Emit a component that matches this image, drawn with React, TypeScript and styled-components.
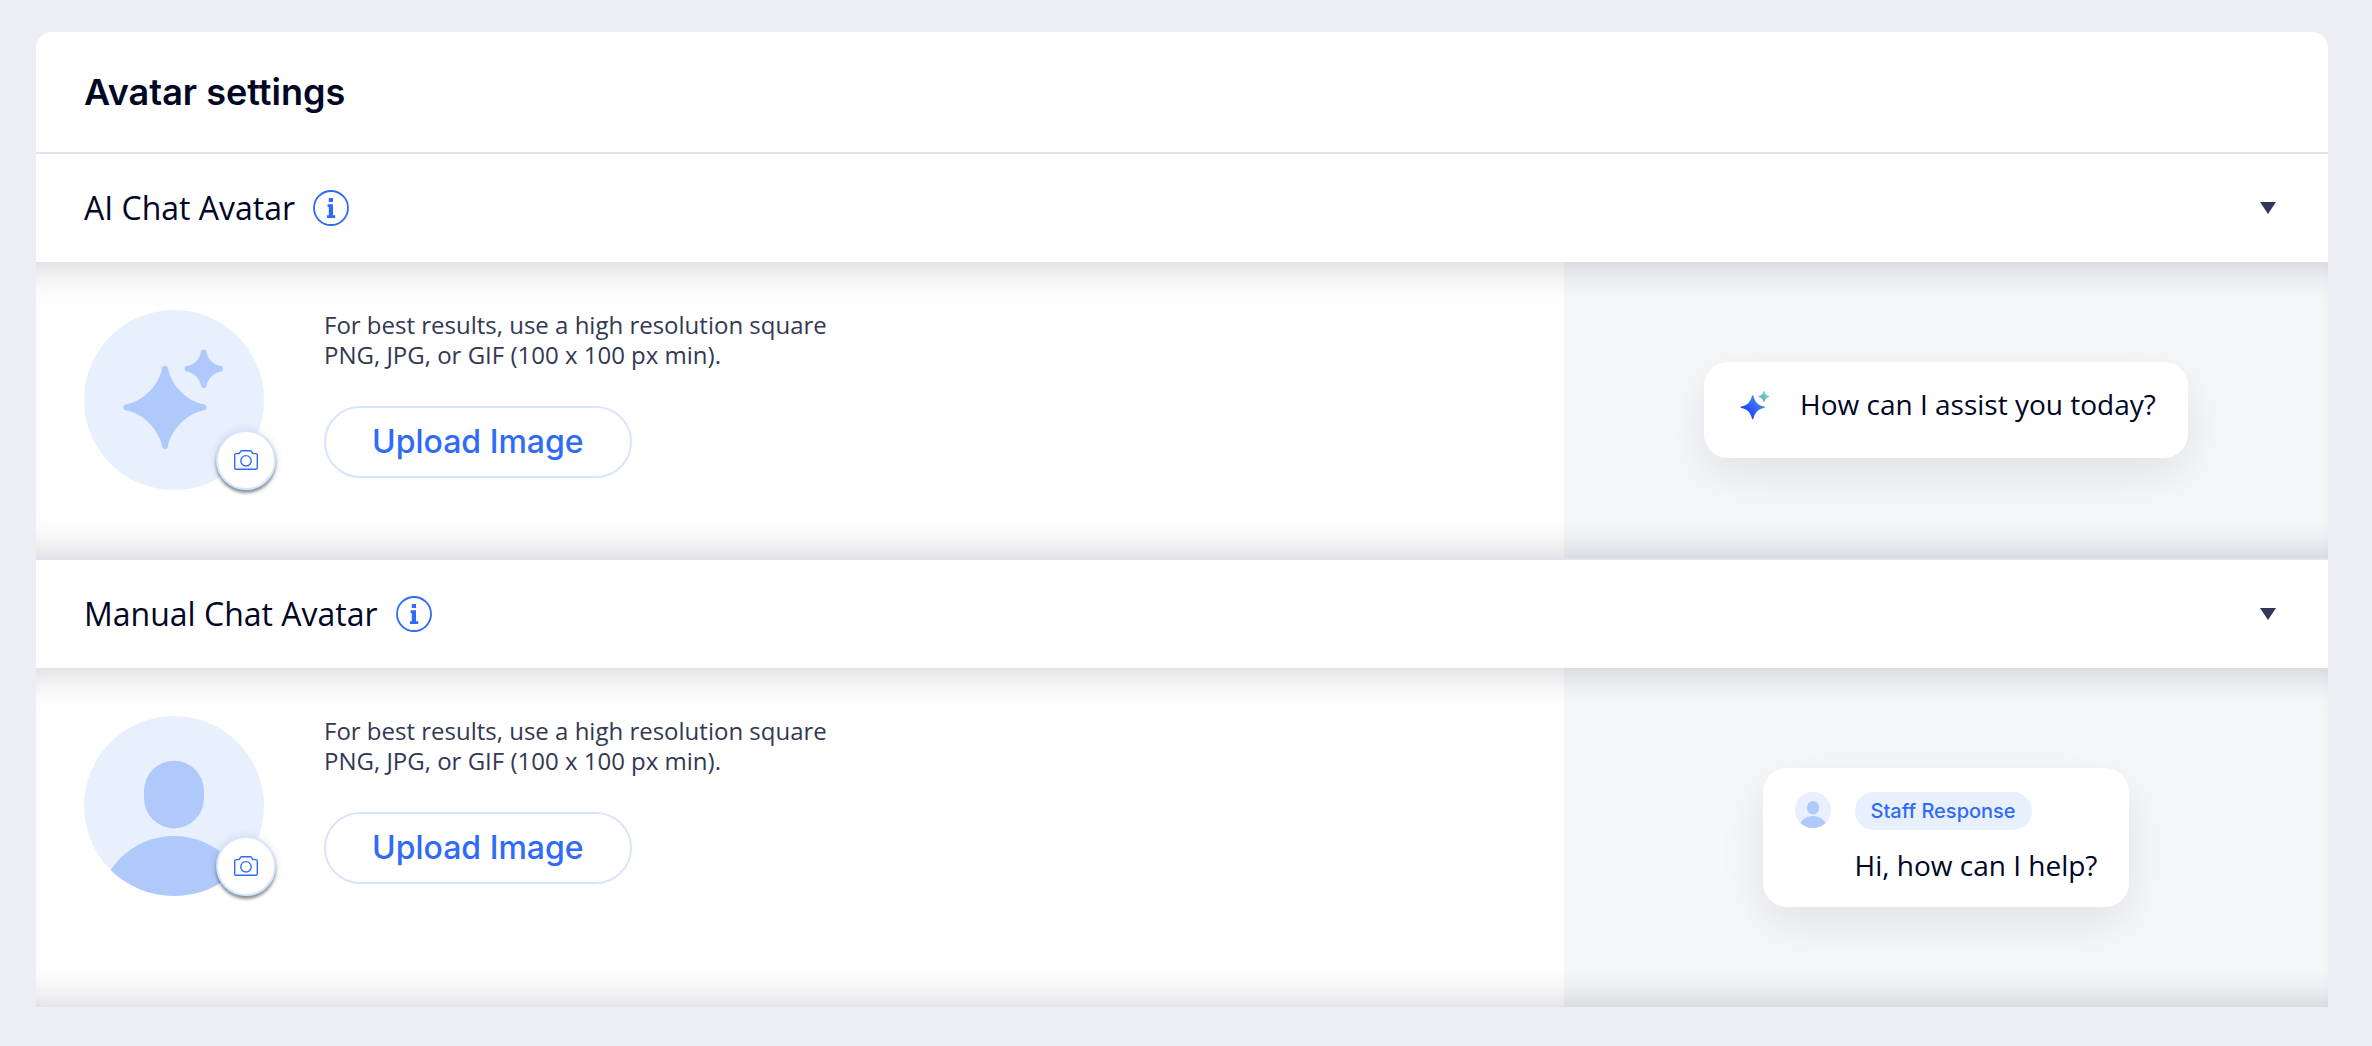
import React, { useState } from "react";
import styled, { createGlobalStyle, css } from "styled-components";

const color = {
  page: "#edeef3",
  surface: "#ffffff",
  preview: "#f5f7f9",
  divider: "#dfe5eb",
  ink: "#000624",
  inkSoft: "#333853",
  blue: "#2f6bf8",
  blueMid: "#b0c9fb",
  blueLight: "#e8f0fe",
  blueBorder: "#d8e5fd",
};

const bodyFont = css`
  font-family: "Open Sans", "Noto Sans", sans-serif;
`;
const strongFont = css`
  font-family: Inter, "Open Sans", sans-serif;
`;

const GlobalStyle = createGlobalStyle`
  *, *::before, *::after { box-sizing: border-box; }
  body {
    margin: 0;
    background: ${color.page};
    color: ${color.ink};
    ${bodyFont}
  }
  button { margin: 0; padding: 0; border: 0; background: none; color: inherit; cursor: pointer; }
  svg { display: block; }
`;

const Page = styled.main`
  padding: 32px 44px 36px 36px;
`;

const Card = styled.section`
  background: ${color.surface};
  border-radius: 16px 16px 0 0;
`;

const CardHeader = styled.header`
  padding: 36px 48px;
  border-bottom: 2px solid ${color.divider};
`;

const Title = styled.h1`
  margin: 0;
  ${strongFont}
  font-size: 36px;
  line-height: 48px;
  font-weight: 600;
`;

const SectionBar = styled.div`
  display: flex;
  align-items: center;
  gap: 18px;
  padding: 30px 48px;
`;

const SectionTitle = styled.h2`
  margin: 0;
  font-size: 32px;
  line-height: 48px;
  font-weight: 400;
`;

const InfoButton = styled.button`
  flex: none;
`;

const ToggleButton = styled.button`
  flex: none;
  margin-left: auto;
  padding: 4px;
`;

const Panel = styled.div<{ $divided: boolean }>`
  position: relative;
  display: grid;
  grid-template-columns: 2fr 1fr;
  border-bottom: ${(p) => (p.$divided ? `2px solid ${color.divider}` : "0")};

  &::after {
    content: "";
    position: absolute;
    inset: 0;
    pointer-events: none;
    box-shadow:
      inset 0 40px 44px -40px rgba(0, 6, 36, 0.21),
      inset 0 -40px 44px -40px rgba(0, 6, 36, 0.21);
  }
`;

const Editor = styled.div`
  display: flex;
  align-items: flex-start;
  gap: 60px;
  padding: 48px;
`;

const Preview = styled.div`
  display: flex;
  align-items: center;
  justify-content: center;
  padding: 100px 24px;
  background: ${color.preview};
`;

const AvatarFrame = styled.div`
  position: relative;
  flex: none;
`;

const CameraButton = styled.button`
  position: absolute;
  right: -12px;
  bottom: 0;
  display: grid;
  place-items: center;
  width: 60px;
  height: 60px;
  border: 2px solid ${color.blueBorder};
  border-radius: 50%;
  background: ${color.surface};
  box-shadow:
    0 3px 3px rgba(22, 45, 61, 0.48),
    0 0 9px rgba(22, 45, 61, 0.12);
`;

const UploadColumn = styled.div`
  display: flex;
  flex-direction: column;
  align-items: flex-start;
  gap: 36px;
`;

const Hint = styled.p`
  margin: 0;
  color: ${color.inkSoft};
  font-size: 24px;
  line-height: 30px;
`;

const UploadButton = styled.button`
  height: 72px;
  padding: 0 46px;
  border: 2px solid ${color.blueBorder};
  border-radius: 36px;
  background: ${color.surface};
  color: ${color.blue};
  ${strongFont}
  font-size: 32px;
  line-height: 48px;
  font-weight: 500;
`;

const Bubble = styled.div<{ $gap: number }>`
  display: flex;
  align-items: flex-start;
  gap: ${(p) => p.$gap}px;
  min-height: 96px;
  padding: 24px 32px;
  border-radius: 24px;
  background: ${color.surface};
  box-shadow: 0 16px 48px rgba(0, 6, 36, 0.09);
`;

const BubbleIcon = styled.span`
  flex: none;
`;

const BubbleBody = styled.div`
  display: flex;
  flex-direction: column;
  align-items: flex-start;
  gap: 17px;
`;

const Message = styled.p`
  margin: 0;
  font-size: 28px;
  line-height: 36px;
`;

const Badge = styled.span`
  padding: 0 16px;
  border-radius: 19px;
  background: ${color.blueLight};
  color: ${color.blue};
  ${strongFont}
  font-size: 20px;
  line-height: 38px;
  font-weight: 500;
`;

function InfoIcon() {
  return (
    <svg width="36" height="36" viewBox="0 0 36 36" aria-hidden="true">
      <circle cx="18" cy="18" r="17" fill="none" stroke={color.blue} strokeWidth="1.8" />
      <rect x="15.8" y="8" width="4.2" height="4" fill={color.blue} />
      <path d="M14.6 14.2H20V25.2H22.2V28H13.9V25.2H15.8V17H14.6Z" fill={color.blue} />
    </svg>
  );
}

function ArrowIcon() {
  return (
    <svg width="16" height="12" viewBox="0 0 16 12" aria-hidden="true">
      <path d="M0 0H16L8 12Z" fill="#32375a" />
    </svg>
  );
}

function CameraIcon() {
  return (
    <svg width="24" height="20" viewBox="0 0 24 20" fill="none" stroke={color.blue} strokeWidth="1.4" strokeLinejoin="round" aria-hidden="true">
      <path d="M2.2 3.6H4.4C5.2 3.6 5.6 3.2 6 2.4C6.4 1.3 6.9 .8 7.8 .8H16.2C17.1 .8 17.6 1.3 18 2.4C18.4 3.2 18.8 3.6 19.6 3.6H21.8C22.8 3.6 23.3 4.2 23.3 5.1V17.8C23.3 18.8 22.8 19.3 21.8 19.3H2.2C1.2 19.3 .7 18.8 .7 17.8V5.1C.7 4.2 1.2 3.6 2.2 3.6Z" />
      <circle cx="12" cy="10.8" r="5.2" />
    </svg>
  );
}

function SparkleAvatar() {
  return (
    <svg width="180" height="180" viewBox="0 0 180 180" aria-hidden="true">
      <circle cx="90" cy="90" r="90" fill={color.blueLight} />
      <g fill={color.blueMid}>
        <path
          transform="translate(81 97.4)"
          d="M-2.9-39.4C-2.2-42.3 2.2-42.3 2.9-39.4C6-22 22-6 39.4-2.9C42.3-2.2 42.3 2.2 39.4 2.9C22 6 6 22 2.9 39.4C2.2 42.3-2.2 42.3-2.9 39.4C-6 22-22 6-39.4 2.9C-42.3 2.2-42.3-2.2-39.4-2.9C-22-6-6-22-2.9-39.4Z"
        />
        <path
          transform="translate(119.8 58.8)"
          d="M-2.7-17.4C-2.2-19.8 2.2-19.8 2.7-17.4C4-9.6 9.6-4 17.4-2.7C19.8-2.2 19.8 2.2 17.4 2.7C9.6 4 4 9.6 2.7 17.4C2.2 19.8-2.2 19.8-2.7 17.4C-4 9.6-9.6 4-17.4 2.7C-19.8 2.2-19.8-2.2-17.4-2.7C-9.6-4-4-9.6-2.7-17.4Z"
        />
      </g>
    </svg>
  );
}

function PersonAvatar({ size }: { size: number }) {
  const clip = `person-clip-${size}`;
  return (
    <svg width={size} height={size} viewBox="0 0 180 180" aria-hidden="true">
      <clipPath id={clip}>
        <circle cx="90" cy="90" r="90" />
      </clipPath>
      <circle cx="90" cy="90" r="90" fill={color.blueLight} />
      <g fill={color.blueMid} clipPath={`url(#${clip})`}>
        <rect x="60" y="44.8" width="60" height="67.6" rx="30" />
        <circle cx="90" cy="196" r="76" />
      </g>
    </svg>
  );
}

function SparkleIcon() {
  return (
    <svg width="40" height="40" viewBox="0 0 40 40" aria-hidden="true">
      <defs>
        <linearGradient id="spark-large" x1="0" y1="1" x2="1" y2="0">
          <stop offset="0.3" stopColor="#2347fb" />
          <stop offset="0.85" stopColor="#4a94f0" />
        </linearGradient>
        <linearGradient id="spark-small" x1="0" y1="1" x2="1" y2="0">
          <stop offset="0.2" stopColor="#57a8d4" />
          <stop offset="0.8" stopColor="#79dcbb" />
        </linearGradient>
      </defs>
      <path
        fill="url(#spark-large)"
        d="M16.7 9.2C17.1 9.2 17.4 9.5 17.5 10C18.6 15.6 22.2 19.4 28 20.5C29.1 20.7 29.1 21.9 28 22.1C22.2 23.2 18.6 27 17.5 32.6C17.3 33.6 16.1 33.6 15.9 32.6C14.8 27 11.2 23.2 5.4 22.1C4.3 21.9 4.3 20.7 5.4 20.5C11.2 19.4 14.8 15.6 15.9 10C16 9.5 16.3 9.2 16.7 9.2Z"
      />
      <path
        fill="url(#spark-small)"
        d="M28 4.9C28.3 4.9 28.5 5.1 28.6 5.4C29.2 7.8 30.6 9.3 33.1 9.9C33.7 10 33.7 11 33.1 11.1C30.6 11.7 29.2 13.2 28.6 15.6C28.5 16.2 27.5 16.2 27.4 15.6C26.8 13.2 25.4 11.7 22.9 11.1C22.3 11 22.3 10 22.9 9.9C25.4 9.3 26.8 7.8 27.4 5.4C27.5 5.1 27.7 4.9 28 4.9Z"
      />
    </svg>
  );
}

interface AvatarSectionProps {
  title: string;
  avatar: React.ReactNode;
  preview: React.ReactNode;
  divided?: boolean;
}

function AvatarSection({ title, avatar, preview, divided = false }: AvatarSectionProps) {
  const [open, setOpen] = useState(true);
  return (
    <section>
      <SectionBar>
        <SectionTitle>{title}</SectionTitle>
        <InfoButton type="button" aria-label={`About ${title}`}>
          <InfoIcon />
        </InfoButton>
        <ToggleButton type="button" aria-label={`Toggle ${title}`} aria-expanded={open} onClick={() => setOpen(!open)}>
          <ArrowIcon />
        </ToggleButton>
      </SectionBar>
      {open && (
        <Panel $divided={divided}>
          <Editor>
            <AvatarFrame>
              {avatar}
              <CameraButton type="button" aria-label="Change picture">
                <CameraIcon />
              </CameraButton>
            </AvatarFrame>
            <UploadColumn>
              <Hint>
                For best results, use a high resolution square
                <br />
                PNG, JPG, or GIF (100 x 100 px min).
              </Hint>
              <UploadButton type="button">Upload Image</UploadButton>
            </UploadColumn>
          </Editor>
          <Preview>{preview}</Preview>
        </Panel>
      )}
    </section>
  );
}

export default function App() {
  return (
    <>
      <GlobalStyle />
      <Page>
        <Card>
          <CardHeader>
            <Title>Avatar settings</Title>
          </CardHeader>
          <AvatarSection
            title="AI Chat Avatar"
            divided
            avatar={<SparkleAvatar />}
            preview={
              <Bubble $gap={24}>
                <BubbleIcon>
                  <SparkleIcon />
                </BubbleIcon>
                <Message>How can I assist you today?</Message>
              </Bubble>
            }
          />
          <AvatarSection
            title="Manual Chat Avatar"
            avatar={<PersonAvatar size={180} />}
            preview={
              <Bubble $gap={24}>
                <BubbleIcon>
                  <PersonAvatar size={36} />
                </BubbleIcon>
                <BubbleBody>
                  <Badge>Staff Response</Badge>
                  <Message>Hi, how can I help?</Message>
                </BubbleBody>
              </Bubble>
            }
          />
        </Card>
      </Page>
    </>
  );
}
